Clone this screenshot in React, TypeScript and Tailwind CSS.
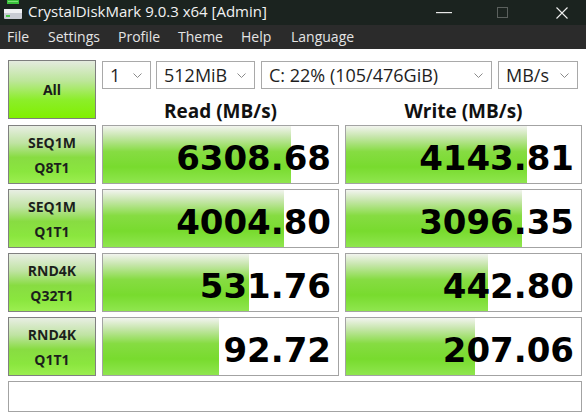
const menus = [
  { title: "File", w: "w-[41px]" },
  { title: "Settings", w: "w-[70px]" },
  { title: "Profile", w: "w-[60px]" },
  { title: "Theme", w: "w-[63px]" },
  { title: "Help", w: "w-[50px]" },
  { title: "Language", w: "w-[80px]" },
];

const rows = [
  { top: "SEQ1M", bottom: "Q8T1", read: "6308.68", readPct: 80, write: "4143.81", writePct: 77 },
  { top: "SEQ1M", bottom: "Q1T1", read: "4004.80", readPct: 77, write: "3096.35", writePct: 75 },
  { top: "RND4K", bottom: "Q32T1", read: "531.76", readPct: 62, write: "442.80", writePct: 60.5 },
  { top: "RND4K", bottom: "Q1T1", read: "92.72", readPct: 49.5, write: "207.06", writePct: 55 },
];

function Chevron() {
  return (
    <svg width="9" height="5" viewBox="0 0 9 5" className="shrink-0">
      <polyline points="0.5,0.5 4.5,4.5 8.5,0.5" fill="none" stroke="#8a8a8a" strokeWidth="1" />
    </svg>
  );
}

function Select({ value, w }: { value: string; w: string }) {
  return (
    <div className={`${w} h-[28px] flex items-center justify-between border border-[#a9a9a9] bg-white pl-[7px] pr-[8px] text-[18px] text-[#1e1e1e]`}>
      <span className="leading-none">{value}</span>
      <Chevron />
    </div>
  );
}

function Score({ value, pct }: { value: string; pct: number }) {
  return (
    <div className="relative h-[59px] border border-[#a3a3a3] bg-white overflow-hidden">
      <div
        className="absolute inset-y-0 left-0 bg-[linear-gradient(to_bottom,#f2f4ef_0%,#c8e6ae_18%,#86dc42_45%,#78db2e_72%,#8fe64e_100%)]"
        style={{ width: `${pct}%` }}
      />
      <div className="relative h-full flex items-center justify-end pr-[7px] pt-[7px] font-['DejaVu_Sans',sans-serif] font-bold text-[34px] leading-none text-black">
        {value}
      </div>
    </div>
  );
}

export default function App() {
  return (
    <div className="w-[586px] h-[420px] bg-white overflow-hidden font-['Open_Sans',sans-serif]">
      {/* title bar */}
      <div className="h-[25px] bg-[#1b231f] flex items-center text-[#f2f2f2]">
        <svg width="22" height="22" viewBox="0 0 22 22" className="ml-[2px] -mt-[3px]">
          <rect x="5" y="0" width="12" height="4" fill="#39c13a" />
          <rect x="6" y="1" width="10" height="1" fill="#7fe27a" />
          <rect x="2" y="9" width="18" height="10" rx="1" fill="#c9ccd4" />
          <rect x="2" y="9" width="18" height="4" fill="#f0f1f4" />
          <rect x="4" y="15" width="4" height="2" fill="#49c94a" />
        </svg>
        <span className="ml-[4px] text-[15px] leading-none -mt-[2px]">CrystalDiskMark 9.0.3 x64 [Admin]</span>
        <div className="ml-auto flex items-center h-full">
          <svg width="16" height="2" viewBox="0 0 16 2" className="mr-[45px]">
            <rect x="0" y="0" width="16" height="1.2" fill="#e8e8e8" />
          </svg>
          <svg width="11" height="11" viewBox="0 0 11 11" className="mr-[48px]">
            <rect x="0.5" y="0.5" width="10" height="10" fill="none" stroke="#5b605d" />
          </svg>
          <svg width="12" height="12" viewBox="0 0 12 12" className="mr-[18px]">
            <path d="M0.5 0.5 L11.5 11.5 M11.5 0.5 L0.5 11.5" stroke="#f0f0f0" strokeWidth="1.1" />
          </svg>
        </div>
      </div>

      {/* menu bar */}
      <div className="h-[24px] bg-[#2b2b2b] flex items-center pl-[7px] text-[14px] text-[#e4e4e4]">
        {menus.map((m) => (
          <span key={m.title} className={`${m.w} leading-none`}>{m.title}</span>
        ))}
      </div>

      {/* body */}
      <div className="pl-[8px] pt-[11px]">
        <div className="flex gap-x-[6px]">
          <div className="w-[88px] h-[59px] flex items-center justify-center border border-[#7e7e7e] bg-[linear-gradient(to_bottom,#e4ebdf_0%,#bde69a_35%,#8cee2a_68%,#80f000_100%)] font-bold text-[14px] text-[#1a1a1a]">
            All
          </div>
          <div className="w-[480px]">
            <div className="flex mt-[1px]">
              <Select value="1" w="w-[49px]" />
              <div className="w-[5px]" />
              <Select value="512MiB" w="w-[99px]" />
              <div className="w-[6px]" />
              <Select value="C: 22% (105/476GiB)" w="w-[231px]" />
              <div className="w-[6px]" />
              <Select value="MB/s" w="w-[80px]" />
            </div>
            <div className="grid grid-cols-[237px_237px] gap-x-[6px] h-[30px] items-end">
              <div className="text-center font-bold text-[19px] leading-[16px] text-[#111]">Read (MB/s)</div>
              <div className="text-center font-bold text-[19px] leading-[16px] text-[#111]">Write (MB/s)</div>
            </div>
          </div>
        </div>

        <div className="mt-[6px] grid grid-cols-[88px_237px_237px] gap-x-[6px] gap-y-[5px]">
          {rows.map((r, i) => (
            <div key={i} className="contents">
              <div className="h-[59px] flex flex-col items-center justify-center border border-[#808080] bg-[linear-gradient(to_bottom,#e8eee3_0%,#bfe3a2_30%,#88dc42_55%,#8ae63e_80%,#9bee50_100%)] font-bold text-[14px] leading-[25px] text-[#1c1f1c]">
                <span>{r.top}</span>
                <span>{r.bottom}</span>
              </div>
              <Score value={r.read} pct={r.readPct} />
              <Score value={r.write} pct={r.writePct} />
            </div>
          ))}
        </div>

        <div className="mt-[5px] w-[574px] h-[31px] border border-[#a3a3a3] bg-white" />
      </div>
    </div>
  );
}
